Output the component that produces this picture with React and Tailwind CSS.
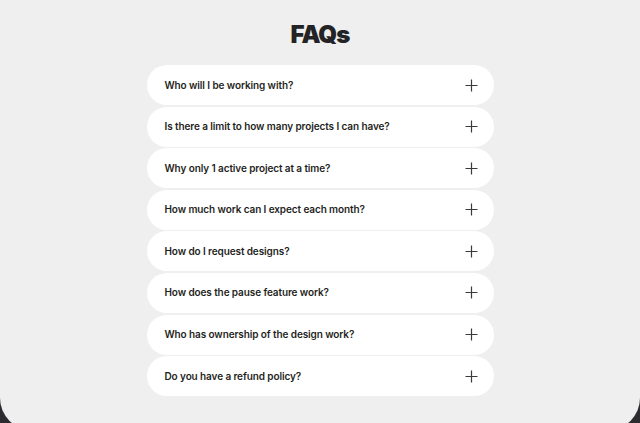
import React from "react";

const faqs = [
  "Who will I be working with?",
  "Is there a limit to how many projects I can have?",
  "Why only 1 active project at a time?",
  "How much work can I expect each month?",
  "How do I request designs?",
  "How does the pause feature work?",
  "Who has ownership of the design work?",
  "Do you have a refund policy?",
];

function Plus() {
  return (
    <svg width="13" height="13" viewBox="0 0 13 13" fill="none" stroke="#3a3a3a" strokeWidth="1.2">
      <path d="M6.5 0.5v12M0.5 6.5h12" />
    </svg>
  );
}

export default function App() {
  return (
    <div className="h-[423px] w-[640px] overflow-hidden bg-[#2b2b30]" style={{ fontFamily: "Inter, 'Noto Sans', sans-serif" }}>
      <div className="h-[430px] bg-[#eeefee] rounded-b-[32px] flex flex-col items-center pt-[20px]">
        <h1 className="text-[24px] leading-[30px] font-black tracking-[-0.04em] text-[#232326]">FAQs</h1>
        <div className="mt-[15px] w-[347px] flex flex-col gap-[1.6px]">
          {faqs.map((q) => (
            <div key={q} className="h-[40px] bg-white rounded-[20px] flex items-center justify-between pl-[18px] pr-[16px]">
              <span className="text-[10px] font-semibold text-[#1f1f22] tracking-[-0.01em]">{q}</span>
              <Plus />
            </div>
          ))}
        </div>
      </div>
    </div>
  );
}
